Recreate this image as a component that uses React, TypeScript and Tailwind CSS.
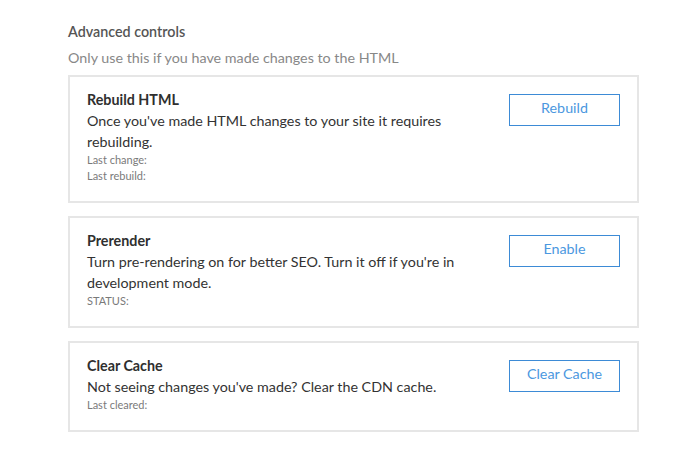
import React from 'react';

interface Control {
  id: string;
  title: string;
  description: string;
  meta: string[];
  action: string;
}

const controls: Control[] = [
  {
    id: 'rebuild',
    title: 'Rebuild HTML',
    description: "Once you've made HTML changes to your site it requires rebuilding.",
    meta: ['Last change:', 'Last rebuild:'],
    action: 'Rebuild',
  },
  {
    id: 'prerender',
    title: 'Prerender',
    description: "Turn pre-rendering on for better SEO. Turn it off if you're in development mode.",
    meta: ['STATUS:'],
    action: 'Enable',
  },
  {
    id: 'cache',
    title: 'Clear Cache',
    description: "Not seeing changes you've made? Clear the CDN cache.",
    meta: ['Last cleared:'],
    action: 'Clear Cache',
  },
];

function ControlCard({ control }: { control: Control }) {
  return (
    <div className="flex justify-between border-2 border-[#e6e6e6] bg-white pt-[13px] pb-[17px] pl-[17px] pr-[17px]">
      <div className="w-[375px]">
        <h3 className="text-[14.3px] leading-[20px] font-bold text-[#2f2f2f]">{control.title}</h3>
        <p className="text-[14.3px] leading-[21px] text-[#333]">{control.description}</p>
        {control.meta.map((m) => (
          <p key={m} className="text-[11px] leading-[16px] text-[#7a7a7a]">
            {m}
          </p>
        ))}
      </div>
      <button className="mt-[4px] h-[32px] w-[111px] shrink-0 border border-[#3d8bd6] pb-[4px] text-[14.3px] text-[#4b98e0]">
        {control.action}
      </button>
    </div>
  );
}

function App() {
  return (
    <div className="min-h-screen bg-white pl-[68px] pr-[59px] pt-[23px] font-['Lato',sans-serif]">
      <h2 className="text-[14.3px] leading-[18px] font-semibold text-[#555]">Advanced controls</h2>
      <p className="mt-[8px] text-[14.3px] leading-[18px] text-[#888]">
        Only use this if you have made changes to the HTML
      </p>
      <div className="mt-[8px] flex w-[571px] flex-col gap-[13px]">
        {controls.map((c) => (
          <ControlCard key={c.id} control={c} />
        ))}
      </div>
    </div>
  );
}

export default App;
